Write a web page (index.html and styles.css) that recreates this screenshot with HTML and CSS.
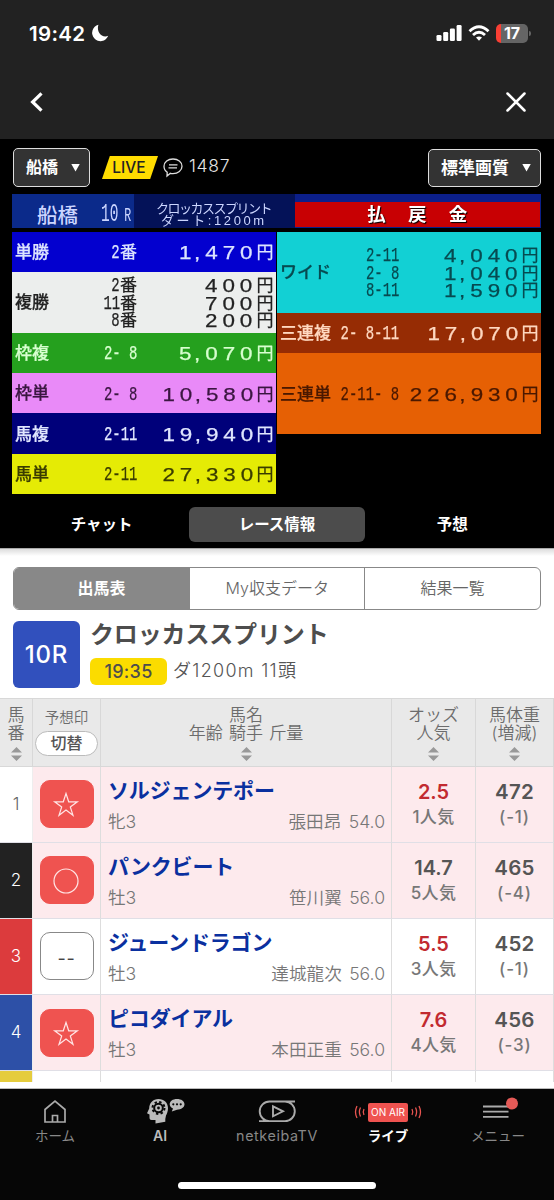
FILE: index.html
```html
<!DOCTYPE html>
<html lang="ja">
<head>
<meta charset="utf-8">
<title>クロッカススプリント</title>
<link rel="stylesheet" href="styles.css">
</head>
<body>
<div class="app">
  <header class="top">
    <div class="status">
      <span class="clock">19:42</span>
      <svg class="moon" width="18" height="18" viewBox="0 0 18 18"><path d="M7.400 .8A8.300 8.300 0 1 0 17.200 11.800C11.500 14.500 5 8.500 7.400 .8Z" fill="#fff"/></svg>
      <svg class="signal" width="26" height="18" viewBox="0 0 26 18" fill="#fff"><rect x="0.500" y="11" width="5" height="6" rx="1.3"/><rect x="7.200" y="8" width="5" height="9" rx="1.3"/><rect x="13.900" y="4.500" width="5" height="12.500" rx="1.3"/><rect x="20.600" y="1" width="5" height="16" rx="1.3"/></svg>
      <svg class="wifi" width="22" height="17" viewBox="0 0 22 17" fill="none" stroke="#fff" stroke-width="2.900"><path d="M1.500 6.200Q11-2.500 20.500 6.200"/><path d="M5 10Q11 4.600 17 10"/><path d="M8 12.500Q11 10.300 14 12.500L11 15.800Z" fill="#fff" stroke="none"/></svg>
      <div class="battery"><span>17</span></div>
    </div>
    <div class="nav">
      <svg width="14" height="20" viewBox="0 0 14 20" fill="none" stroke="#fff" stroke-width="3.200"><path d="M11.500 1.300 2.600 10l8.900 8.700"/></svg>
      <svg width="20" height="20" viewBox="0 0 20 20" fill="none" stroke="#fff" stroke-width="2.500" stroke-linecap="round"><path d="M1.500 1.500l17 17M18.500 1.500l-17 17"/></svg>
    </div>
  </header>

  <section class="player">
    <div class="controls">
      <div class="select venue"><span>船橋</span><b></b></div>
      <div class="live">LIVE</div>
      <svg class="bubble" width="20" height="19" viewBox="0 0 20 19" fill="none" stroke="#ddd" stroke-width="1.300"><path d="M10 1c5 0 9 3 9 7.300s-4 7.300-9 7.300c-1 0-1.800-.1-2.600-.3L4 18l.2-3.800C2.200 13 1 10.800 1 8.300 1 4 5 1 10 1Z"/><path d="M6 6.800h8.500M5.500 9.800H14"/></svg>
      <span class="count">1487</span>
      <div class="select quality"><span>標準画質</span><b></b></div>
    </div>

    <div class="board">
      <div class="bhead">
        <div class="bplace"><span class="bname">船橋</span><span class="brace">10<small>R</small></span></div>
        <div class="btitle"><span>クロッカススプリント</span><span class="bdist">ダート:1200m</span></div>
        <div class="bpay"><div>払 戻 金</div></div>
      </div>
      <div class="bbody">
        <div class="bcol">
          <div class="pay win"><em>単勝</em><div class="nums"><p><s>2</s>番</p></div><div class="yen"><p><span>1<i>,</i>470</span>円</p></div></div>
          <div class="pay place"><em>複勝</em><div class="nums"><p><s>2</s>番</p><p><s>11</s>番</p><p><s>8</s>番</p></div><div class="yen"><p><span>400</span>円</p><p><span>700</span>円</p><p><span>200</span>円</p></div></div>
          <div class="pay bq"><em>枠複</em><div class="nums"><p><s>2- 8</s></p></div><div class="yen"><p><span>5<i>,</i>070</span>円</p></div></div>
          <div class="pay be"><em>枠単</em><div class="nums"><p><s>2- 8</s></p></div><div class="yen"><p><span>10<i>,</i>580</span>円</p></div></div>
          <div class="pay hq"><em>馬複</em><div class="nums"><p><s>2-11</s></p></div><div class="yen"><p><span>19<i>,</i>940</span>円</p></div></div>
          <div class="pay he"><em>馬単</em><div class="nums"><p><s>2-11</s></p></div><div class="yen"><p><span>27<i>,</i>330</span>円</p></div></div>
        </div>
        <div class="bcol right">
          <div class="pay wide"><em>ワイド</em><div class="nums"><p><s>2-11</s></p><p><s>2- 8</s></p><p><s>8-11</s></p></div><div class="yen"><p><span>4<i>,</i>040</span>円</p><p><span>1<i>,</i>040</span>円</p><p><span>1<i>,</i>590</span>円</p></div></div>
          <div class="pay trio"><em>三連複</em><div class="nums"><p><s>2- 8-11</s></p></div><div class="yen"><p><span>17<i>,</i>070</span>円</p></div></div>
          <div class="pay trifecta"><em>三連単</em><div class="nums"><p><s>2-11- 8</s></p></div><div class="yen"><p><span>226<i>,</i>930</span>円</p></div></div>
        </div>
      </div>
    </div>

    <div class="ptabs"><span>チャット</span><span class="on">レース情報</span><span>予想</span></div>
  </section>

  <main class="info">
    <div class="seg"><span class="on">出馬表</span><span>My収支データ</span><span>結果一覧</span></div>
    <div class="race">
      <div class="rno">10R</div>
      <div class="rtext">
        <h1>クロッカススプリント</h1>
        <div class="rmeta"><span class="time">19:35</span><span class="course">ダ1200m 11頭</span></div>
      </div>
    </div>

    <div class="table">
      <div class="row head">
        <div><span>馬<br>番</span><svg class="sort" viewBox="0 0 11 14"><path d="M5.500 0 11 5.500H0ZM5.500 14 0 8.500h11Z"/></svg></div>
        <div class="hmark"><span>予想印</span><button>切替</button></div>
        <div><span>馬名<br>年齢 騎手 斤量</span><svg class="sort" viewBox="0 0 11 14"><path d="M5.500 0 11 5.500H0ZM5.500 14 0 8.500h11Z"/></svg></div>
        <div><span>オッズ<br>人気</span><svg class="sort" viewBox="0 0 11 14"><path d="M5.500 0 11 5.500H0ZM5.500 14 0 8.500h11Z"/></svg></div>
        <div><span>馬体重<br>(増減)</span><svg class="sort" viewBox="0 0 11 14"><path d="M5.500 0 11 5.500H0ZM5.500 14 0 8.500h11Z"/></svg></div>
      </div>

      <div class="row pink">
        <div class="no n1">1</div>
        <div class="mark"><div class="box red"><svg width="26" height="26" viewBox="0 0 26 26"><path d="M13 2.500l2.700 8.300h8.600l-7 5.100 2.700 8.400-7-5.200-7 5.200 2.700-8.400-7-5.100h8.600Z"/></svg></div></div>
        <div class="horse"><h2>ソルジェンテポー</h2><p><span>牝3</span><span>張田昂 54.0</span></p></div>
        <div class="odds hot"><b>2.5</b><span>1人気</span></div>
        <div class="weight"><b>472</b><span>(-1)</span></div>
      </div>
      <div class="row pink">
        <div class="no n2">2</div>
        <div class="mark"><div class="box red"><svg width="26" height="26" viewBox="0 0 26 26"><circle cx="13" cy="14" r="12"/></svg></div></div>
        <div class="horse"><h2>パンクビート</h2><p><span>牡3</span><span>笹川翼 56.0</span></p></div>
        <div class="odds"><b>14.7</b><span>5人気</span></div>
        <div class="weight"><b>465</b><span>(-4)</span></div>
      </div>
      <div class="row">
        <div class="no n3">3</div>
        <div class="mark"><div class="box none">--</div></div>
        <div class="horse"><h2>ジューンドラゴン</h2><p><span>牡3</span><span>達城龍次 56.0</span></p></div>
        <div class="odds hot"><b>5.5</b><span>3人気</span></div>
        <div class="weight"><b>452</b><span>(-1)</span></div>
      </div>
      <div class="row pink">
        <div class="no n4">4</div>
        <div class="mark"><div class="box red"><svg width="26" height="26" viewBox="0 0 26 26"><path d="M13 2.500l2.700 8.300h8.600l-7 5.100 2.700 8.400-7-5.200-7 5.200 2.700-8.400-7-5.100h8.600Z"/></svg></div></div>
        <div class="horse"><h2>ピコダイアル</h2><p><span>牡3</span><span>本田正重 56.0</span></p></div>
        <div class="odds hot"><b>7.6</b><span>4人気</span></div>
        <div class="weight"><b>456</b><span>(-3)</span></div>
      </div>
      <div class="row stub"><div class="no n5"></div><div></div><div></div><div></div><div></div></div>
    </div>
  </main>

  <footer class="bar">
    <div class="tabs">
      <div class="tab"><svg width="24" height="26" viewBox="0 0 24 26" fill="none" stroke="#aaa" stroke-width="1.700"><path d="M2 10.500 12 2l10 8.500V23H2Z"/><path d="M9.500 23v-6.500h5V23"/></svg><span>ホーム</span></div>
      <div class="tab ai"><svg width="40" height="26" viewBox="0 0 40 26"><path fill="#bbb" d="M14.500 0C20 0 24 3.700 24 9.200c0 3.500-1.200 5.500-2 7.300l-.7 3.500v2.700L11.500 24.500V21H7.500c-1.500 0-2-1-2-2.500v-3L3 14.300 5.200 9.500C5.200 4 9 0 14.500 0Z"/><circle cx="14.500" cy="9" r="4.300" fill="none" stroke="#080808" stroke-width="2"/><circle cx="14.500" cy="9" r="6" fill="none" stroke="#080808" stroke-width="2" stroke-dasharray="2.350 2.362"/><circle cx="14.500" cy="9" r="1.400" fill="#080808"/><path fill="#bbb" d="M33 0c4.300 0 7.500 2.200 7.500 5.300s-3.200 5.400-7.500 5.400l-5.200 1.900 1.200-3c-2-.9-3.300-2.500-3.300-4.300C25.700 2.200 28.700 0 33 0Z"/><g fill="#080808"><circle cx="29.300" cy="5.300" r="1.100"/><circle cx="33" cy="5.300" r="1.100"/><circle cx="36.700" cy="5.300" r="1.100"/></g></svg><span>AI</span></div>
      <div class="tab tv"><svg width="38" height="26" viewBox="0 0 38 26" fill="none" stroke="#aaa" stroke-width="1.900"><path d="M37 2.500H11.500a9.800 9.800 0 0 0 0 19.600H27A9.800 9.800 0 0 0 27 2.500M1 22.100h11"/><path d="M15 7.300v10l10-5Z"/></svg><span>netkeibaTV</span></div>
      <div class="tab live-tab"><div class="air"><svg width="12" height="14" viewBox="0 0 12 14"><path d="M3 1Q0 7 3 13M6.500 2.500Q4.300 7 6.500 11.500M10 4Q8.500 7 10 10"/></svg><b>ON AIR</b><svg width="12" height="14" viewBox="0 0 12 14"><path d="M9 1Q12 7 9 13M5.500 2.500Q7.700 7 5.500 11.500M2 4Q3.500 7 2 10"/></svg></div><span>ライブ</span></div>
      <div class="tab menu"><svg width="38" height="26" viewBox="0 0 38 26"><path d="M4 7.500h25.500M4 12.700h25.500M4 17.900h25.500" stroke="#aaa" stroke-width="1.800"/><circle cx="33" cy="4.500" r="6" fill="#e55a57"/></svg><span>メニュー</span></div>
    </div>
    <div class="home"></div>
  </footer>
</div>
</body>
</html>
```

FILE: styles.css
```css
* { box-sizing: border-box; }
body { margin: 0; font-family: Inter, "Noto Sans CJK JP", sans-serif; color: #666; }
h1, h2, p { margin: 0; }
svg { display: block; flex: none; overflow: visible; }
.app { width: 554px; height: 1200px; display: flex; flex-direction: column; overflow: hidden; background: #fff; }

/* status and navigation */
.top { height: 139px; flex: none; background: #222; color: #fff; }
.status { height: 66px; padding: 0 26px 0 29px; display: flex; align-items: center; }
.clock { font-size: 20.500px; font-weight: 600; width: 57px; letter-spacing: .3px; }
.moon { margin-left: 5px; }
.signal { margin-left: auto; }
.wifi { margin-left: 6px; }
.battery { margin: 0 0 0 6px; width: 32px; height: 19px; border-radius: 5px; font-size: 16px; font-weight: 700; line-height: 19px; text-align: center; background: linear-gradient(90deg, #f93f34 5.500px, #656565 5.500px); position: relative; }
.battery::after { content: ""; position: absolute; right: -3px; top: 7px; width: 2px; height: 5px; background: #656565; border-radius: 0 2px 2px 0; }
.nav { height: 73px; padding: 0 28px 2px 30px; display: flex; justify-content: space-between; align-items: center; }

/* player */
.player { height: 410px; flex: none; background: #000; color: #fff; border-bottom: 1px solid #aaa; }
.controls { height: 55px; padding: 2px 13px 0; display: flex; align-items: center; }
.select { height: 39px; border: 1.500px solid #ddd; border-radius: 5px; background: #333; display: flex; align-items: center; justify-content: space-between; padding: 0 9px 3px 12px; font-size: 16px; font-weight: 700; }
.select b { width: 9px; height: 8px; background: #fff; clip-path: polygon(0 0, 100% 0, 50% 100%); margin-top: 3px; }
.venue { width: 77px; }
.quality { width: 113px; height: 38px; margin-left: auto; font-size: 17px; }
.live { width: 56px; height: 23px; margin-left: 12px; background: #ffdc00; color: #222; clip-path: polygon(14% 0, 100% 0, 86% 100%, 0 100%); font-size: 15.500px; font-weight: 500; line-height: 23px; text-align: center; padding-right: 2px; }
.bubble { margin-left: 5px; }
.count { margin-left: 6px; font-size: 17.500px; font-weight: 300; color: #e4e4e4; letter-spacing: .7px; padding-bottom: 4px; }

/* payout board */
.board { height: 301px; margin: 0 13.500px 0 12px; font-family: "Liberation Sans", "Noto Sans CJK JP", sans-serif; filter: blur(.35px); }
.bhead { height: 34px; display: grid; grid-template-columns: 122px 161px 1fr; background: #041258; }
.bplace { background: #0b2a8a; display: flex; align-items: center; padding: 9px 0 0 25px; color: #ccd6ff; height: 34px; overflow: hidden; }
.bname { font-size: 20.500px; line-height: 24px; white-space: nowrap; flex: none; font-weight: 500; }
.brace { font: 25px/24px "Liberation Mono", monospace; transform: scaleX(.58); transform-origin: left; margin-left: 23px; white-space: nowrap; flex: none; }
.brace small { font-size: 20px; margin-left: 10px; }
.btitle { display: flex; flex-direction: column; padding: 9px 0 0 22px; color: #ccd6ff; font-size: 13px; line-height: 12px; letter-spacing: -1.500px; white-space: nowrap; }
.bdist { letter-spacing: 2.600px; font-size: 13px; padding-left: 5px; }
.bpay { padding: 8px 1px 1px 0; background: #0b1f8a; }
.bpay div { background: #c80003; height: 25px; font-size: 18.500px; font-weight: 700; line-height: 26px; text-align: center; word-spacing: 17px; color: #fff; text-shadow: 1px 1px 1px #000; }
.bbody { display: grid; grid-template-columns: 263.500px 263.500px; column-gap: 1.500px; padding-top: 3.500px; }
.bcol { display: flex; flex-direction: column; }
.pay { height: 40.300px; flex: none; display: grid; grid-template-columns: 75px 47px 1fr; align-items: center; padding: 2px 2px 0 3px; }
.pay em { font-style: normal; font-size: 17px; font-weight: 500; line-height: 20px; white-space: nowrap; -webkit-text-stroke: .25px; }
.pay p { height: 17.300px; line-height: 17.300px; white-space: nowrap; font-size: 17px; display: flex; justify-content: flex-end; -webkit-text-stroke: .25px; }
.nums s { text-decoration: none; font: 21px/17.300px "Liberation Mono", monospace; white-space: pre; transform: scaleX(.665); transform-origin: right; }
.yen span { font-size: 19px; transform: translateX(1px) scaleX(1.180); transform-origin: right; letter-spacing: 4.100px; }
.yen i { font-style: normal; letter-spacing: 4.300px; margin-left: -2px; }
.win { background: #0300cf; color: #dde4ff; }
.place { background: #eceeed; color: #222; height: 61px; }
.bq { background: #25a01e; color: #d8ffd0; }
.be { background: #e98af8; color: #3a1640; }
.hq { background: #00007a; color: #e0e6ff; }
.he { background: #e5eb05; color: #3a3c00; }
.right .pay { grid-template-columns: 55px 64px 1fr; }
.right .nums p { margin-left: -60px; }
.right .wide { background: #12d0d4; color: #074a50; height: 81.300px; }
.right .trio { background: #962c04; color: #ffd8c0; }
.right .trifecta { background: #e66004; color: #4a1800; height: 81px; }

.ptabs { height: 56px; padding: 3px 14px 0; display: grid; grid-template-columns: repeat(3, 1fr); align-items: center; text-align: center; font-size: 15.500px; font-weight: 700; line-height: 35px; }
.ptabs .on { background: #4c4c4c; border-radius: 6px; }

/* race header */
.info { height: 539px; flex: none; padding-top: 18px; background: linear-gradient(#ddd, #fff 7px); overflow: hidden; }
.seg { height: 43px; margin: 0 13.500px 0 13px; border: 1.500px solid #888; border-radius: 6px; display: grid; grid-template-columns: 1fr 1fr 1fr; text-align: center; line-height: 40px; font-size: 16px; font-weight: 350; background: #fff; overflow: hidden; }
.seg span + span { border-left: 1.500px solid #888; }
.seg .on { background: #888; color: #fff; font-weight: 700; }
.race { height: 88px; padding: 11px 13px 0; display: flex; }
.rno { width: 67px; height: 67px; flex: none; border-radius: 6px; background: #3150bd; color: #fff; font-size: 24px; font-weight: 500; line-height: 67px; text-align: center; letter-spacing: .8px; }
.rtext { margin-left: 10px; }
.rtext h1 { font-size: 24px; line-height: 28px; height: 37px; font-weight: 700; color: #4d4d4d; letter-spacing: -.15px; }
.rmeta { display: flex; align-items: center; }
.time { width: 77px; height: 27px; border-radius: 6px; background: #fbdc00; color: #4d4d4d; font-size: 18px; font-weight: 500; line-height: 27px; text-align: center; letter-spacing: .3px; }
.course { margin-left: 6px; font-size: 18px; font-weight: 350; color: #555; letter-spacing: 1.300px; word-spacing: 0; line-height: 20px; padding-bottom: 1px; }

/* entries */
.row { display: grid; grid-template-columns: 33px 68px 291px 84px 78px; height: 76.200px; }
.row > div { border-right: 1.500px solid #ddd; border-bottom: 1.500px solid #e0dfe6; overflow: hidden; min-width: 0; }
.head { height: 68.500px; background: #e9e9e9; border-top: 1px solid #d8d8d8; color: #6c6c6c; font-size: 17px; line-height: 17.500px; font-weight: 350; text-align: center; }
.head > div { border-color: #d8d8d8; display: flex; flex-direction: column; align-items: center; padding-top: 8px; white-space: nowrap; word-spacing: 1.500px; }
.sort { width: 11px; height: 14px; margin-top: 5px; fill: #999; }
.head .hmark { font-size: 14.500px; padding-top: 10px; }
.hmark button { width: 63px; height: 25px; margin-top: 4px; border: 1px solid #bbb; border-radius: 13px; background: #fff; font: 500 16px/20px Inter, "Noto Sans CJK JP", sans-serif; color: #555; padding: 0; flex: none; }
.pink { background: #fdeaed; }
.row .no { border-right-color: #eee; text-align: center; font-size: 17px; font-weight: 300; line-height: 74px; color: #fff; }
.row .n1 { background: #fff; color: #666; }
.n2 { background: #222; }
.n3 { background: #dc3b3d; }
.n4 { background: #2d50a7; }
.n5 { background: #e5cc3d; }
.mark { display: flex; align-items: center; justify-content: center; }
.box { width: 54px; height: 48px; border: 1.500px solid #888; border-radius: 10px; background: #fff; display: flex; align-items: center; justify-content: center; font-size: 18px; color: #444; }
.none { padding-top: 5px; letter-spacing: .8px; }
.box.red { border-color: #ef5350; background: #ef5350; }
.box svg { fill: none; stroke: #ffe4e4; stroke-width: 1.200; margin-right: 1px; }
.horse { padding: 9px 6px 0 7px; }
.horse h2 { font-size: 21px; font-weight: 700; line-height: 30px; height: 33px; color: #0a309f; letter-spacing: -.15px; white-space: nowrap; }
.horse p { display: flex; justify-content: space-between; font-size: 17.600px; line-height: 26px; font-weight: 350; word-spacing: 2.500px; color: #777; }
.odds, .weight { text-align: center; padding-top: 11px; }
.odds b, .weight b { display: block; font-size: 20px; line-height: 28px; font-weight: 600; color: #555; }
.weight b { font-size: 20.500px; letter-spacing: .2px; }
.odds span, .weight span { display: block; font-size: 17px; line-height: 22px; font-weight: 500; color: #777; }
.odds span { letter-spacing: .3px; }
.weight span { letter-spacing: .8px; }
.odds.hot b { color: #c22a30; }
.row.stub { height: 11px; }
.row.stub > div { border-bottom: 0; }

/* bottom bar */
.bar { height: 112px; flex: none; background: #060606; border-top: 1px solid #bbb; color: #888; position: relative; }
.tabs { display: grid; grid-template-columns: 110px 100px 134px 88px 122px; padding: 10px 0 0; }
.tab { display: flex; flex-direction: column; align-items: center; font-size: 13.500px; line-height: 22px; }
.tab span { white-space: nowrap; }
.ai { color: #bbb; font-weight: 600; font-size: 14px; }
.ai svg { margin-left: 7px; }
.tv { letter-spacing: .6px; font-size: 14.300px; }
.air { height: 26px; display: flex; align-items: center; gap: 2px; }
.air b { width: 40px; height: 19px; border-radius: 2px; background: #ef5350; color: #fff; font-size: 10px; line-height: 19px; font-weight: 400; text-align: center; }
.air svg { fill: none; stroke: #e85450; stroke-width: 1.300; }
.live-tab { color: #fff; font-weight: 700; }
.menu { padding-left: 10px; }
.home { position: absolute; left: 178px; bottom: 11px; width: 198px; height: 7px; border-radius: 4px; background: #fff; }
```
